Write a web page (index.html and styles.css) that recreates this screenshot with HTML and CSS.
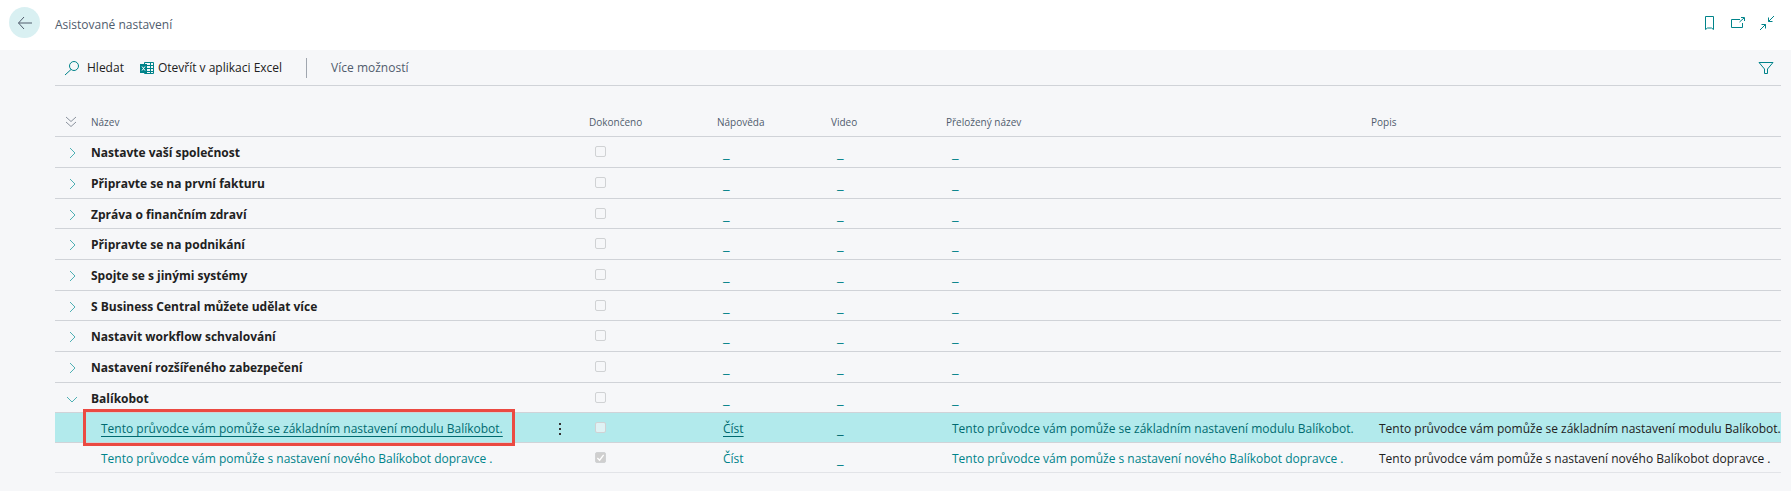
FILE: index.html
```
<!DOCTYPE html>
<html lang="cs">
<head>
    <meta charset="UTF-8">
    <meta name="viewport" content="width=device-width, initial-scale=1.0">
    <title>Asistované nastavení</title>
    <link rel="stylesheet" href="styles.css">
</head>
<body>
    <header class="topbar">
        <button class="back" aria-label="Zpět">
            <svg width="16" height="14" viewBox="0 0 16 14"><path d="M7 1L1.500 7L7 13M1.500 7H15"/></svg>
        </button>
        <h1 class="title">Asistované nastavení</h1>
        <div class="window-tools">
            <button aria-label="Záložka">
                <svg width="16" height="16" viewBox="0 0 16 16"><path d="M4.500 1.500h8v13L10.500 13h-4L4.500 14.500z"/></svg>
            </button>
            <button aria-label="Otevřít v novém okně">
                <svg width="16" height="16" viewBox="0 0 16 16"><path d="M10 4.500H1.500v8h11V8"/><path d="M9.500 7L14 3M11 2.500h3.500V6"/></svg>
            </button>
            <button aria-label="Zmenšit">
                <svg width="16" height="16" viewBox="0 0 16 16"><path d="M15 1L9.500 6.500M9.500 2.500v4h4M1 15l5.500-5.500M2.500 9.500h4v4"/></svg>
            </button>
        </div>
    </header>

    <main class="page">
        <div class="toolbar">
            <button class="action">
                <svg width="16" height="16" viewBox="0 0 16 16"><circle cx="10" cy="6" r="4.500"/><path d="M7 9.500L1 15"/></svg>
                Hledat
            </button>
            <button class="action excel">
                <svg width="14" height="14" viewBox="0 0 14 14">
                    <path d="M4.500 1.500h9v11h-9zM7 4.500h6M7 7.500h6M7 10.500h6M10.500 2v10"/>
                    <path class="solid" d="M0 3h7v9H0z"/>
                    <path class="cross" d="M2 5.500l3 4M5 5.500l-3 4"/>
                </svg>
                Otevřít v aplikaci Excel
            </button>
            <span class="divider"></span>
            <button class="action more">Více možností</button>
            <button class="action filter" aria-label="Filtr">
                <svg width="16" height="16" viewBox="0 0 16 16"><path d="M1 2.500h14L9.500 9v4.500h-3V9z"/></svg>
            </button>
        </div>

        <table class="list">
            <colgroup>
                <col class="col-expand">
                <col class="col-name">
                <col class="col-menu">
                <col class="col-done">
                <col class="col-help">
                <col class="col-video">
                <col class="col-translated">
                <col>
            </colgroup>
            <thead>
                <tr>
                    <th><button class="expand all" aria-label="Rozbalit vše"><svg width="12" height="12" viewBox="0 0 12 12"><path d="M1 1l5 4.500L11 1M1 6l5 4.500L11 6"/></svg></button></th>
                    <th>Název</th>
                    <th></th>
                    <th>Dokončeno</th>
                    <th>Nápověda</th>
                    <th>Video</th>
                    <th>Přeložený název</th>
                    <th>Popis</th>
                </tr>
            </thead>
            <tbody>
                <tr>
                    <td><button class="expand" aria-label="Rozbalit"><svg width="12" height="12" viewBox="0 0 12 12"><path d="M4 1l5 5l-5 5"/></svg></button></td>
                    <td class="group">Nastavte vaší společnost</td>
                    <td></td>
                    <td><input type="checkbox" aria-label="Dokončeno" disabled></td>
                    <td><a class="blank" href="#">_</a></td>
                    <td><a class="blank" href="#">_</a></td>
                    <td><a class="blank" href="#">_</a></td>
                    <td></td>
                </tr>
                <tr>
                    <td><button class="expand" aria-label="Rozbalit"><svg width="12" height="12" viewBox="0 0 12 12"><path d="M4 1l5 5l-5 5"/></svg></button></td>
                    <td class="group">Připravte se na první fakturu</td>
                    <td></td>
                    <td><input type="checkbox" aria-label="Dokončeno" disabled></td>
                    <td><a class="blank" href="#">_</a></td>
                    <td><a class="blank" href="#">_</a></td>
                    <td><a class="blank" href="#">_</a></td>
                    <td></td>
                </tr>
                <tr>
                    <td><button class="expand" aria-label="Rozbalit"><svg width="12" height="12" viewBox="0 0 12 12"><path d="M4 1l5 5l-5 5"/></svg></button></td>
                    <td class="group">Zpráva o finančním zdraví</td>
                    <td></td>
                    <td><input type="checkbox" aria-label="Dokončeno" disabled></td>
                    <td><a class="blank" href="#">_</a></td>
                    <td><a class="blank" href="#">_</a></td>
                    <td><a class="blank" href="#">_</a></td>
                    <td></td>
                </tr>
                <tr>
                    <td><button class="expand" aria-label="Rozbalit"><svg width="12" height="12" viewBox="0 0 12 12"><path d="M4 1l5 5l-5 5"/></svg></button></td>
                    <td class="group">Připravte se na podnikání</td>
                    <td></td>
                    <td><input type="checkbox" aria-label="Dokončeno" disabled></td>
                    <td><a class="blank" href="#">_</a></td>
                    <td><a class="blank" href="#">_</a></td>
                    <td><a class="blank" href="#">_</a></td>
                    <td></td>
                </tr>
                <tr>
                    <td><button class="expand" aria-label="Rozbalit"><svg width="12" height="12" viewBox="0 0 12 12"><path d="M4 1l5 5l-5 5"/></svg></button></td>
                    <td class="group">Spojte se s jinými systémy</td>
                    <td></td>
                    <td><input type="checkbox" aria-label="Dokončeno" disabled></td>
                    <td><a class="blank" href="#">_</a></td>
                    <td><a class="blank" href="#">_</a></td>
                    <td><a class="blank" href="#">_</a></td>
                    <td></td>
                </tr>
                <tr>
                    <td><button class="expand" aria-label="Rozbalit"><svg width="12" height="12" viewBox="0 0 12 12"><path d="M4 1l5 5l-5 5"/></svg></button></td>
                    <td class="group">S Business Central můžete udělat více</td>
                    <td></td>
                    <td><input type="checkbox" aria-label="Dokončeno" disabled></td>
                    <td><a class="blank" href="#">_</a></td>
                    <td><a class="blank" href="#">_</a></td>
                    <td><a class="blank" href="#">_</a></td>
                    <td></td>
                </tr>
                <tr>
                    <td><button class="expand" aria-label="Rozbalit"><svg width="12" height="12" viewBox="0 0 12 12"><path d="M4 1l5 5l-5 5"/></svg></button></td>
                    <td class="group">Nastavit workflow schvalování</td>
                    <td></td>
                    <td><input type="checkbox" aria-label="Dokončeno" disabled></td>
                    <td><a class="blank" href="#">_</a></td>
                    <td><a class="blank" href="#">_</a></td>
                    <td><a class="blank" href="#">_</a></td>
                    <td></td>
                </tr>
                <tr>
                    <td><button class="expand" aria-label="Rozbalit"><svg width="12" height="12" viewBox="0 0 12 12"><path d="M4 1l5 5l-5 5"/></svg></button></td>
                    <td class="group">Nastavení rozšířeného zabezpečení</td>
                    <td></td>
                    <td><input type="checkbox" aria-label="Dokončeno" disabled></td>
                    <td><a class="blank" href="#">_</a></td>
                    <td><a class="blank" href="#">_</a></td>
                    <td><a class="blank" href="#">_</a></td>
                    <td></td>
                </tr>
                <tr>
                    <td><button class="expand" aria-label="Sbalit"><svg width="12" height="12" viewBox="0 0 12 12"><path d="M1 4l5 5l5-5"/></svg></button></td>
                    <td class="group">Balíkobot</td>
                    <td></td>
                    <td><input type="checkbox" aria-label="Dokončeno" disabled></td>
                    <td><a class="blank" href="#">_</a></td>
                    <td><a class="blank" href="#">_</a></td>
                    <td><a class="blank" href="#">_</a></td>
                    <td></td>
                </tr>
                <tr class="entry selected">
                    <td></td>
                    <td class="item marked"><a class="underlined" href="#">Tento průvodce vám pomůže se základním nastavení modulu Balíkobot.</a></td>
                    <td><button class="row-menu" aria-label="Další možnosti"><svg width="4" height="14" viewBox="0 0 4 14"><path d="M1 1h2v2H1zM1 6h2v2H1zM1 11h2v2H1z"/></svg></button></td>
                    <td><input type="checkbox" aria-label="Dokončeno" disabled></td>
                    <td><a class="underlined" href="#">Číst</a></td>
                    <td><a class="blank" href="#">_</a></td>
                    <td><a href="#">Tento průvodce vám pomůže se základním nastavení modulu Balíkobot.</a></td>
                    <td>Tento průvodce vám pomůže se základním nastavení modulu Balíkobot.</td>
                </tr>
                <tr class="entry last">
                    <td></td>
                    <td class="item"><a href="#">Tento průvodce vám pomůže s nastavení nového Balíkobot dopravce .</a></td>
                    <td></td>
                    <td><input type="checkbox" aria-label="Dokončeno" checked disabled></td>
                    <td><a href="#">Číst</a></td>
                    <td><a class="blank" href="#">_</a></td>
                    <td><a href="#">Tento průvodce vám pomůže s nastavení nového Balíkobot dopravce .</a></td>
                    <td>Tento průvodce vám pomůže s nastavení nového Balíkobot dopravce .</td>
                </tr>
            </tbody>
        </table>
    </main>
</body>
</html>
```
FILE: styles.css
```
* {
    margin: 0;
    padding: 0;
    box-sizing: border-box;
}

body {
    min-height: 100vh;
    background-color: #f6f7f9;
    color: #212121;
    font-family: "Segoe UI", "Open Sans", "Noto Sans", sans-serif;
    font-size: 12px;
    line-height: 18px;
}
button {
    display: flex;
    align-items: center;
    border: none;
    background: none;
    color: inherit;
    font: inherit;
    cursor: pointer;
}
svg {
    fill: none;
    stroke: #00838a;
}
a {
    color: #00838a;
    text-decoration: none;
}
.underlined {
    text-decoration: underline;
    text-underline-offset: 3px;
}
.blank {
    font-size: 15px;
}

/* top bar */
.topbar {
    display: flex;
    align-items: center;
    height: 50px;
    padding: 0 16px 5px 9px;
    background-color: white;
}
.back {
    justify-content: center;
    width: 31px;
    height: 31px;
    border-radius: 50%;
    background-color: #d9f0f2;
}
.back svg {
    stroke: #505c6d;
}
.title {
    margin-left: 15px;
    padding-top: 5px;
    color: #505c6d;
    font-size: 12px;
    font-weight: normal;
}
.window-tools {
    display: flex;
    gap: 13px;
    margin-left: auto;
}

/* action bar */
.page {
    padding: 0 10px 18px 55px;
}
.toolbar {
    display: flex;
    align-items: center;
    height: 36px;
    padding: 1px 7px 0 9px;
    border-bottom: 1px solid #d0d3d8;
}
.action {
    gap: 7px;
}
.excel {
    gap: 4px;
    margin-left: 16px;
}
.excel .solid {
    fill: #00838a;
    stroke: none;
}
.excel .cross {
    stroke: white;
}
.divider {
    width: 1px;
    height: 20px;
    margin: 0 24px;
    background-color: #a0a6af;
}
.more {
    color: #505c6d;
}
.filter {
    margin-left: auto;
}

/* list */
.list {
    width: 100%;
    margin-top: 20px;
    border-collapse: separate;
    border-spacing: 0;
    table-layout: fixed;
}
.col-expand {
    width: 36px;
}
.col-name {
    width: 441px;
}
.col-menu {
    width: 57px;
}
.col-done {
    width: 128px;
}
.col-help {
    width: 114px;
}
.col-video {
    width: 115px;
}
.col-translated {
    width: 425px;
}
th,
td {
    height: 31px;
    padding-top: 2px;
    padding-left: 6px;
    border-bottom: 1px solid #d0d3d8;
    text-align: left;
    vertical-align: middle;
    white-space: nowrap;
}
tbody tr:nth-child(3n) td,
.entry td {
    height: 30px;
}
th {
    padding-left: 0;
    color: #505c6d;
    font-size: 10px;
    font-weight: normal;
}
td:last-child {
    padding-left: 8px;
}
td.group {
    padding-left: 0;
    font-weight: bold;
}
td.item {
    padding-left: 10px;
}
.last td {
    border-color: #e2e4e8;
}
.expand {
    margin-left: 5px;
}
th .expand {
    margin-left: 10px;
}
.expand svg {
    stroke: #4fb0b4;
}
.all svg {
    stroke: #8a929d;
}
input[type="checkbox"] {
    display: block;
    width: 11px;
    height: 11px;
    margin-bottom: 3px;
    border: 1px solid #d0d2d4;
    border-radius: 2px;
    appearance: none;
}
input[type="checkbox"]:checked {
    background: #cfcfcf url("data:image/svg+xml,%3Csvg xmlns='http://www.w3.org/2000/svg' viewBox='0 0 10 10'%3E%3Cpath d='M1.500 5.500L4 8l4.500-6' fill='none' stroke='white' stroke-width='1.500'/%3E%3C/svg%3E");
}
.selected td {
    background-color: #b2eaec;
}
.selected a {
    color: #006a70;
}
.selected input {
    background-color: #dff2f4;
}
.row-menu {
    margin-left: 20px;
}
.row-menu svg {
    fill: #333333;
    stroke: none;
}

/* red frame round the highlighted wizard */
.marked {
    position: relative;
}
.marked::after {
    content: "";
    position: absolute;
    inset: -4px 17px -4px -8px;
    border: 3px solid #eb4a42;
    pointer-events: none;
}
```
